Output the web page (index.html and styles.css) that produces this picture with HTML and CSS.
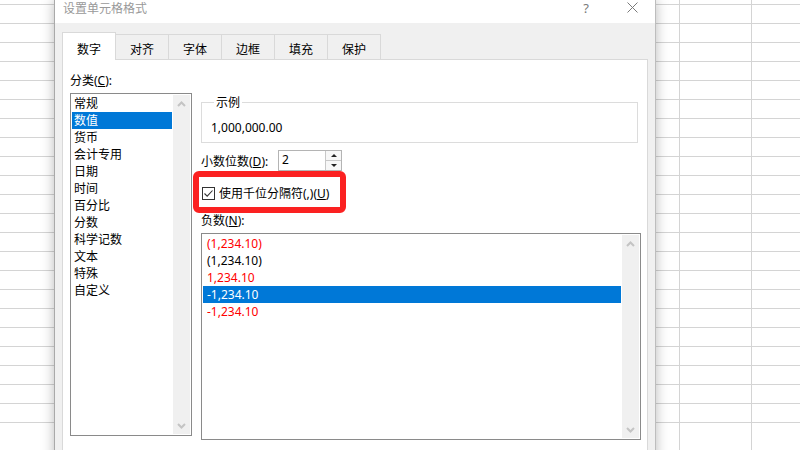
FILE: index.html
```html
<!DOCTYPE html>
<html lang="zh-CN">

  <head>
    <meta charset="UTF-8">
    <meta name="viewport" content="width=device-width, initial-scale=1.0">
    <title>设置单元格格式</title>
    <link rel="stylesheet" href="styles.css">
  </head>

  <body>
    <div class="screen">
      <!-- 左侧表格 -->
      <div class="sheet sheet-left"><span class="cell-val">0.00</span></div>

      <div class="dialog">
        <div class="titlebar">
          <span class="title">设置单元格格式</span>
          <span class="tb-btn help">?</span>
          <span class="tb-btn close">
            <svg width="11" height="11" viewBox="0 0 11 11"><path d="M0.5 0.5 L10.5 10.5 M10.5 0.5 L0.5 10.5" stroke="#7a7a7a" stroke-width="1" fill="none"/></svg>
          </span>
        </div>

        <ul class="tabs">
          <li class="tab active">数字</li>
          <li class="tab">对齐</li>
          <li class="tab">字体</li>
          <li class="tab">边框</li>
          <li class="tab">填充</li>
          <li class="tab">保护</li>
        </ul>

        <div class="panel">
          <div class="col-cat">
            <div class="lbl">分类(<u>C</u>):</div>
            <div class="listbox cat-list">
              <ul class="items">
                <li>常规</li>
                <li class="selected">数值</li>
                <li>货币</li>
                <li>会计专用</li>
                <li>日期</li>
                <li>时间</li>
                <li>百分比</li>
                <li>分数</li>
                <li>科学记数</li>
                <li>文本</li>
                <li>特殊</li>
                <li>自定义</li>
              </ul>
              <div class="vscroll">
                <span class="arrow"><svg width="9" height="6" viewBox="0 0 9 6"><path d="M1 5 L4.5 1.5 L8 5" stroke="#c4c4c4" stroke-width="2" fill="none"/></svg></span>
                <span class="arrow"><svg width="9" height="6" viewBox="0 0 9 6"><path d="M1 1 L4.5 4.5 L8 1" stroke="#c4c4c4" stroke-width="2" fill="none"/></svg></span>
              </div>
            </div>
          </div>

          <div class="col-opts">
            <fieldset class="sample">
              <legend>示例</legend>
              <div class="sample-val">1,000,000.00</div>
            </fieldset>

            <div class="row-spin">
              <span class="spin-lbl">小数位数(<u>D</u>):</span>
              <div class="spin">
                <span class="spin-val">2</span>
                <div class="spin-btns">
                  <span class="spin-btn"><i class="tri-up"></i></span>
                  <span class="spin-btn"><i class="tri-down"></i></span>
                </div>
              </div>
            </div>

            <div class="row-check">
              <svg class="checkbox" width="13" height="13" viewBox="0 0 13 13">
                <rect x="0.5" y="0.5" width="12" height="12" fill="#fff" stroke="#333"/>
                <path d="M2.5 6.5 L5.2 9.2 L10.5 3.5" stroke="#333" stroke-width="1.1" fill="none"/>
              </svg>
              <span>使用千位分隔符(,)(<u>U</u>)</span>
            </div>

            <div class="lbl neg-lbl">负数(<u>N</u>):</div>
            <div class="listbox neg-list">
              <ul class="items">
                <li class="red">(1,234.10)</li>
                <li>(1,234.10)</li>
                <li class="red">1,234.10</li>
                <li class="selected">-1,234.10</li>
                <li class="red">-1,234.10</li>
              </ul>
              <div class="vscroll">
                <span class="arrow"><svg width="9" height="6" viewBox="0 0 9 6"><path d="M1 5 L4.5 1.5 L8 5" stroke="#c4c4c4" stroke-width="2" fill="none"/></svg></span>
                <span class="arrow"><svg width="9" height="6" viewBox="0 0 9 6"><path d="M1 1 L4.5 4.5 L8 1" stroke="#c4c4c4" stroke-width="2" fill="none"/></svg></span>
              </div>
            </div>

            <!-- 红色标注框 -->
            <div class="callout"></div>
          </div>
        </div>
      </div>

      <!-- 右侧表格 -->
      <div class="sheet-right">
        <div class="sheet gcol c1"></div>
        <div class="sheet gcol c2"></div>
        <div class="sheet gcol c3"></div>
      </div>
    </div>
  </body>

</html>
```

FILE: styles.css
```css
* {
  padding: 0;
  margin: 0;
  box-sizing: border-box;
}

ul {
  list-style: none;
}

body {
  width: 800px;
  height: 450px;
  overflow: hidden;
  background: #fff;
  color: #000;
  font: 12px/17px "Noto Sans", "Noto Sans CJK SC", sans-serif;
}

.screen {
  display: flex;
  height: 450px;
}

/* 表格网格线 */
.sheet {
  background-color: #fff;
  background-image: repeating-linear-gradient(to bottom, transparent 0, transparent 18px, #d4d4d4 18px, #d4d4d4 19px);
  background-position: 0 -14px;
}

.sheet-left {
  width: 54px;
  flex: none;
  overflow: hidden;
}

.cell-val {
  display: block;
  margin-top: -12px;
  font-size: 13px;
  line-height: 15px;
}

.sheet-right {
  flex: 1;
  display: flex;
}

.gcol {
  border-right: 1px solid #d4d4d4;
}

.c1 {
  width: 24px;
}

.c2 {
  width: 72px;
}

.c3 {
  flex: 1;
  border-right: 0;
}

/* 对话框 */
.dialog {
  width: 602px;
  height: 470px;
  flex: none;
  background: #f0f0f0;
  border-left: 1px solid #a9a9a9;
  border-right: 1px solid #bdbdbd;
  box-shadow: 0 0 12px rgba(0, 0, 0, .28);
  position: relative;
  z-index: 2;
}

.titlebar {
  height: 23px;
  background: #fff;
  display: flex;
}

.title {
  flex: 1;
  padding-left: 8px;
  color: #999;
  line-height: 17px;
}

.tb-btn {
  width: 46px;
  display: flex;
  justify-content: center;
}

.help {
  color: #7a7a7a;
  font-size: 13px;
  line-height: 17px;
}

.close {
  padding-top: 2px;
}

.close svg {
  display: block;
}

.tabs {
  height: 36px;
  display: flex;
  align-items: flex-end;
  padding-left: 7px;
}

.tab {
  width: 54px;
  height: 25px;
  padding-top: 6px;
  margin-left: -1px;
  text-align: center;
  border: 1px solid #d9d9d9;
  border-bottom: 0;
  background: #f0f0f0;
}

.tab:first-child {
  margin-left: 0;
}

.tab.active {
  height: 28px;
  padding-top: 8px;
  margin-bottom: -1px;
  background: #fff;
  position: relative;
  z-index: 1;
}

.panel {
  margin: 0 7px;
  height: 400px;
  background: #fff;
  border: 1px solid #d9d9d9;
  padding: 12px 0 0 7px;
  display: flex;
  align-items: flex-start;
}

.col-cat {
  width: 122px;
  flex: none;
}

.cat-list {
  margin-top: 4px;
  height: 343px;
}

.listbox {
  border: 1px solid #8a8a8a;
  padding: 1px;
  display: flex;
}

.listbox .items {
  flex: 1;
}

.items li {
  height: 17px;
  padding-left: 2px;
  white-space: nowrap;
}

.items li.selected {
  background: #0078d7;
  color: #fff;
}

.neg-list .items li {
  padding-left: 4px;
}

.items li.red {
  color: #f00;
}

.vscroll {
  width: 17px;
  margin-left: 1px;
  background: #f0f0f0;
  display: flex;
  flex-direction: column;
  justify-content: space-between;
}

.arrow {
  height: 17px;
  display: flex;
  align-items: center;
  justify-content: center;
}

.arrow svg {
  display: block;
}

.col-opts {
  width: 440px;
  margin-left: 9px;
  position: relative;
}

.sample {
  margin: 22px 3px 0 0;
  padding: 8px 9px 6px;
  border: 1px solid #dcdcdc;
  min-width: 0;
}

.sample legend {
  margin-left: 3px;
  padding: 0 2px;
}

.row-spin {
  margin-top: 7px;
  height: 21px;
  display: flex;
  align-items: center;
}

.spin-lbl {
  width: 77px;
  padding-top: 2px;
}

.spin {
  width: 64px;
  height: 21px;
  border: 1px solid #b4b4b4;
  display: flex;
  justify-content: space-between;
}

.spin-val {
  padding-left: 3px;
  line-height: 18px;
}

.spin-btns {
  width: 16px;
  display: flex;
  flex-direction: column;
  border-left: 1px solid #c8c8c8;
}

.spin-btn {
  flex: 1;
  background: #f7f7f7;
  display: flex;
  align-items: center;
  justify-content: center;
}

.spin-btn + .spin-btn {
  border-top: 1px solid #c8c8c8;
}

.tri-up,
.tri-down {
  width: 0;
  height: 0;
  border-left: 3px solid transparent;
  border-right: 3px solid transparent;
}

.tri-up {
  border-bottom: 3px solid #222;
}

.tri-down {
  border-top: 3px solid #222;
}

.row-check {
  margin-top: 14px;
  height: 17px;
  display: flex;
  align-items: center;
  gap: 4px;
}

.checkbox {
  display: block;
  margin-left: 1px;
}

.neg-lbl {
  margin-top: 10px;
}

.neg-list {
  margin-top: 4px;
  height: 207px;
}

.callout {
  position: absolute;
  left: -8px;
  top: 99px;
  width: 153px;
  height: 42px;
  border: 6px solid #fb2121;
  border-radius: 6px;
}
```
